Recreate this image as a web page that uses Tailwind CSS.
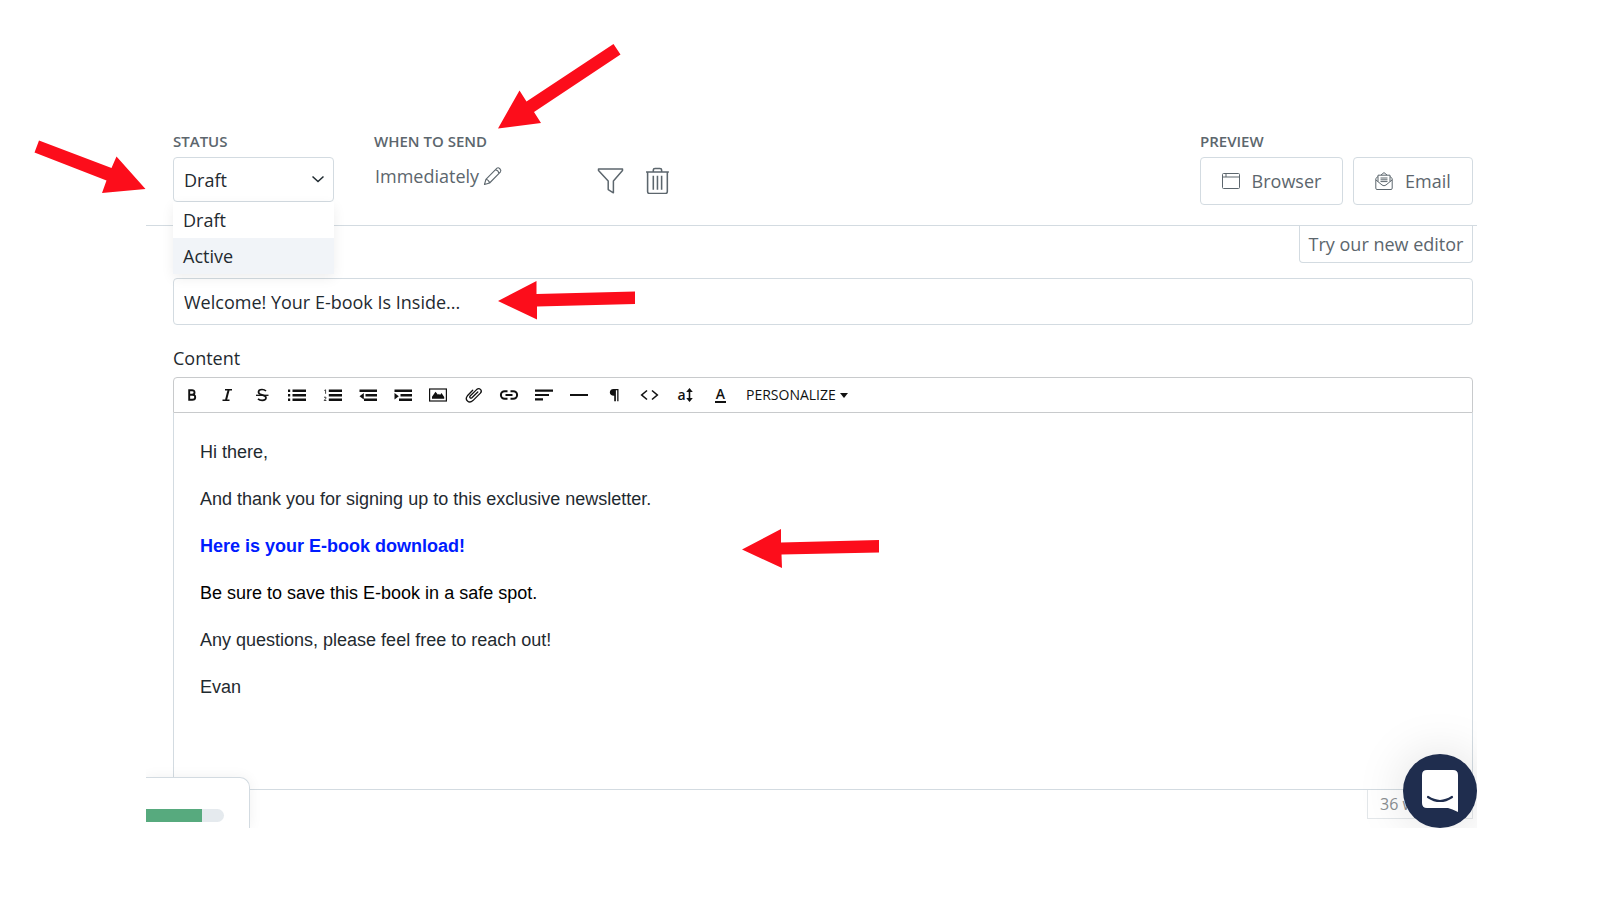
<!DOCTYPE html>
<html lang="en">
<head>
<meta charset="utf-8">
<title>Email editor</title>
<script src="https://cdn.jsdelivr.net/npm/@tailwindcss/browser@4"></script>
</head>
<body class="relative overflow-hidden bg-white font-['Open_Sans','Noto_Sans',sans-serif] text-lg text-[#1f2a30]">
<main class="relative mt-[120px] mr-[123px] ml-[146px] overflow-hidden pb-[9px]">
  <header class="flex items-start border-b border-[#d3dbe1] pt-2 pr-1 pb-5 pl-[27px] text-[#5c666d]">
    <div class="relative w-[201px]">
      <label for="status" class="block h-[29px] text-[15px] leading-[26px] font-semibold">STATUS</label>
      <div class="relative w-[161px]">
        <select id="status" class="block h-[45px] w-full appearance-none rounded-sm border border-[#d3dbe1] bg-white px-2.5 text-lg text-[#1f2a30]">
          <option selected>Draft</option>
          <option>Active</option>
        </select>
        <svg class="pointer-events-none absolute top-4 right-2.5 size-3" viewBox="0 0 12 12" fill="none" stroke="#1f2a30" stroke-width="1.5"><path d="M.5 3.500l5.500 5 5.500-5"/></svg>
      </div>
    </div>
    <div>
      <h2 class="h-[29px] text-[15px] leading-[26px] font-semibold">WHEN TO SEND</h2>
      <div class="flex">
        <button type="button" class="flex h-[38px] w-[223px] items-center gap-1 pl-px text-lg">
          Immediately
          <svg class="size-5" viewBox="0 0 20 20" fill="none" stroke="currentColor" stroke-width="1.1" stroke-linejoin="round"><path d="M1.500 18.500l1.400-5.200L14 2.200c1.500-1.300 4.900 1.500 3.500 3.600L6.600 17zM2.900 13.300c1.800.4 3.200 1.700 3.700 3.700M12.400 3.800c1.800.4 3.200 1.800 3.600 3.600"/></svg>
        </button>
        <button type="button" aria-label="Filter" class="mt-2 mr-[21px]"><svg class="size-[27px]" viewBox="0 0 27 27" fill="none" stroke="currentColor" stroke-width="1.5" stroke-linejoin="round"><path d="M1.500 2h24v1.600L16.400 14v11.800l-5.200-3.200V14L1.500 3.600z"/></svg></button>
        <button type="button" aria-label="Delete" class="mt-2"><svg class="size-[27px]" viewBox="0 0 26 26" fill="none" stroke="currentColor" stroke-width="1.5"><path d="M2.500 5v18.500q0 2 2 2h15q2 0 2-2V5M1 4.800h22M8 4.500V3q0-1.600 1.600-1.600h4.800Q16 1.400 16 3v1.500M8 8.500v13.500M12 8.500v13.500M16 8.500v13.500"/></svg></button>
      </div>
    </div>
    <div class="ml-auto">
      <h2 class="h-[29px] text-[15px] leading-[26px] font-semibold">PREVIEW</h2>
      <div class="flex gap-2.5">
        <button type="button" class="flex h-12 w-[143px] items-center justify-center gap-3 rounded-sm border border-[#d3dbe1]">
          <svg class="size-[18px]" viewBox="0 0 18 18" fill="none" stroke="currentColor" stroke-width="1"><rect x=".5" y="1.500" width="17" height="15" rx="1"/><path d="M.5 5h17M4 1.500V5"/></svg>
          Browser
        </button>
        <button type="button" class="flex h-12 w-[120px] items-center justify-center gap-3 rounded-sm border border-[#d3dbe1]">
          <svg class="size-[18px]" viewBox="0 0 18 18" fill="none" stroke="currentColor" stroke-width="1" stroke-linejoin="round"><path d="M3 4.500L.8 6.500v9.700q0 1.300 1.200 1.300h14q1.200 0 1.200-1.300V6.500L15 4.500M1 8l6 5q2 1.600 4 0l6-5M3 9.600V3.200h12v6.400M6 3L9 .6 12 3M5.500 6h7M5.500 7.800h7M5.500 9.600h7"/></svg>
          Email
        </button>
      </div>
    </div>
  </header>

  <section class="pr-1 pl-[27px]">
    <div class="flex h-[52px] items-start justify-end">
      <a href="#new-editor" class="flex h-[37px] w-[174px] items-center justify-center rounded-b-sm border border-t-0 border-[#d3dbe1] text-[#5c666d]">Try our new editor</a>
    </div>
    <input aria-label="Subject" type="text" value="Welcome! Your E-book Is Inside..." class="block h-[47px] w-full rounded-sm border border-[#d3dbe1] px-2.5 text-lg">
    <h2 class="mt-5 h-8 leading-[26px]">Content</h2>

    <div role="toolbar" aria-label="Formatting" class="flex h-9 items-center rounded-t-sm border border-[#c8cacc] text-[#111]">
      <div class="grid w-[564px] grid-cols-16">
        <button type="button" aria-label="Bold" class="grid place-items-center"><svg class="size-5" viewBox="0 0 20 20" fill="none" stroke="currentColor" stroke-width="1.900"><path d="M7.200 5.200v9.600h3q3 0 3-2.600T10 9.700H7.500h2.300q2.700 0 2.700-2.300T9.800 5.200z"/></svg></button>
        <button type="button" aria-label="Italic" class="grid place-items-center"><svg class="size-5" viewBox="0 0 20 20" fill="none" stroke="currentColor" stroke-width="1.500"><path d="M8 4.800h7M5.500 15.200h7"/><path stroke-width="2" d="M11.600 5L9 15"/></svg></button>
        <button type="button" aria-label="Strikethrough" class="grid place-items-center"><svg class="size-5" viewBox="0 0 20 20" fill="none" stroke="currentColor" stroke-width="1.700"><path d="M14 6q-1.500-1.500-4-1.500-3.500 0-3.500 2.500 0 2 3.500 2.800 4 .9 4 3 0 2.500-3.800 2.500-2.700 0-4.200-1.500"/><path stroke-width="1.300" d="M4 10.300h12.500"/></svg></button>
        <button type="button" aria-label="Bulleted list" class="grid place-items-center"><svg class="size-5" viewBox="0 0 20 20" fill="none" stroke="currentColor" stroke-width="2.400"><path d="M5.500 5.700H19M5.500 10.200H19M5.500 14.700H19M1 5.700h2.200M1 10.200h2.200M1 14.700h2.200"/></svg></button>
        <button type="button" aria-label="Numbered list" class="grid place-items-center"><svg class="size-5" viewBox="0 0 20 20" fill="none" stroke="currentColor" stroke-width="2.400"><path d="M5.800 5.700H19M5.800 10.200H19M5.800 14.700H19"/><path stroke-width=".8" d="M1.300 5.500l1.300-.7v4M1 12.300q2.500-.8 2 .8L1.200 15.500h2.200"/></svg></button>
        <button type="button" aria-label="Outdent" class="grid place-items-center"><svg class="size-5" viewBox="0 0 20 20" fill="none" stroke="currentColor" stroke-width="2.400"><path d="M1.500 5.700H19M7.500 10.200H19M6 14.700H19"/><path fill="currentColor" stroke="none" d="M5.800 8v6.500L1.500 11.300z"/></svg></button>
        <button type="button" aria-label="Indent" class="grid place-items-center"><svg class="size-5" viewBox="0 0 20 20" fill="none" stroke="currentColor" stroke-width="2.400"><path d="M1.500 5.700H19M7.500 10.200H19M6 14.700H19"/><path fill="currentColor" stroke="none" d="M1.500 8v6.500l4.300-3.200z"/></svg></button>
        <button type="button" aria-label="Image" class="grid place-items-center"><svg class="size-5" viewBox="0 0 20 20"><rect x="1.600" y="4" width="16.800" height="12" fill="none" stroke="currentColor" stroke-width="1.200"/><path fill="currentColor" d="M4 13.800v-2l3.500-5 2.500 3 1-1 1 1.200L13.500 8l2.700 4v1.800z"/></svg></button>
        <button type="button" aria-label="Attachment" class="grid place-items-center"><svg class="size-5" viewBox="0 0 20 20" fill="none" stroke="currentColor" stroke-width="1.300" stroke-linecap="round"><path d="M13.800 7l-5.900 5.700c-1.300 1.200-3-.4-1.800-1.700l6.500-6.400c2.800-2.500 6.200.7 3.800 3.500l-7.500 7.500c-4 3.600-8.600-1-5.500-4.800l5.300-5.600"/></svg></button>
        <button type="button" aria-label="Link" class="grid place-items-center"><svg class="size-5" viewBox="0 0 20 20" fill="none" stroke="currentColor" stroke-width="2"><path d="M8.500 6.200H5.700a3.800 3.800 0 000 7.600H8.500M11.500 6.200h2.800a3.800 3.800 0 010 7.600H11.500M6.500 10h7"/></svg></button>
        <button type="button" aria-label="Align" class="grid place-items-center"><svg class="size-5" viewBox="0 0 20 20" fill="none" stroke="currentColor" stroke-width="2.200"><path d="M1 5.700h18M1 10h14M1 14.300h8"/></svg></button>
        <button type="button" aria-label="Horizontal rule" class="grid place-items-center"><svg class="size-5" viewBox="0 0 20 20" stroke="currentColor" stroke-width="2"><path d="M1 10h18"/></svg></button>
        <button type="button" aria-label="Paragraph" class="grid place-items-center"><svg class="size-5" viewBox="0 0 20 20" fill="currentColor"><path d="M8.500 4H13.500v12.200h-1.300V5.300h-1.300v10.900H9.200V10.800C3.500 11 3.500 4 8.500 4z"/></svg></button>
        <button type="button" aria-label="Code" class="grid place-items-center"><svg class="size-5" viewBox="0 0 20 20" fill="none" stroke="currentColor" stroke-width="1.600"><path d="M7 5.500L1.700 10 7 14.500M12 5.500l5.300 4.500-5.300 4.500"/></svg></button>
        <button type="button" aria-label="Font size" class="flex h-5 items-center justify-center text-sm leading-5 font-semibold">a<svg class="h-4 w-[7px]" viewBox="0 0 7 16" fill="currentColor"><path d="M3.500 1l3.300 4H4.300v6h2.500l-3.300 4-3.300-4h2.500V5H.2z"/></svg></button>
        <button type="button" aria-label="Text colour" class="grid h-5 place-items-center"><span class="h-4 border-b-2 px-px text-sm leading-[13px] font-semibold">A</span></button>
      </div>
      <button type="button" class="flex items-center gap-1 pl-2 text-sm">PERSONALIZE<svg class="h-[5px] w-2" viewBox="0 0 8 5" fill="currentColor"><path d="M0 0h8L4 5z"/></svg></button>
    </div>

    <div contenteditable="true" role="textbox" aria-label="Content" class="flex h-[377px] flex-col gap-[23px] border border-t-0 border-[#d3dbe1] px-[26px] pt-[27px] font-['Liberation_Sans',Arial,sans-serif] text-lg leading-6">
      <p>Hi there,</p>
      <p>And thank you for signing up to this exclusive newsletter.</p>
      <p class="font-bold text-[#001cff]">Here is your E-book download!</p>
      <p class="text-black">Be sure to save this E-book in a safe spot.</p>
      <p>Any questions, please feel free to reach out!</p>
      <p>Evan</p>
    </div>
    <div class="ml-auto flex h-[29px] w-[106px] items-center border border-t-0 border-[#e3e7ea] pl-3 text-base whitespace-nowrap text-[#8b8f92]">36 words</div>
  </section>

  <aside aria-label="Setup progress" class="absolute bottom-0 left-0 h-[51px] w-[104px] rounded-tr-[10px] border-t border-r border-[#d3dbe1] bg-white pt-[31px] shadow-[0_0_14px_rgba(0,0,0,0.06)]">
    <div role="progressbar" aria-label="Progress" class="h-[13px] w-[78px] overflow-hidden rounded-r-full bg-[#e5eaee]"><div class="h-full w-14 bg-[#57aa7e]"></div></div>
  </aside>
  <button type="button" aria-label="Open chat" class="absolute right-0 bottom-0 grid size-[74px] place-items-center rounded-full bg-[#1f2d4e] shadow-[0_0_50px_rgba(0,0,0,0.13)]">
    <svg class="h-[42px] w-9" viewBox="0 0 36 42"><path fill="#fff" d="M5 0h26q5 0 5 5v37q-6-3-10-4H5q-5 0-5-5V5q0-5 5-5z"/><path fill="none" stroke="#1f2d4e" stroke-width="2.200" stroke-linecap="round" d="M6 27q12 8 24 0"/></svg>
  </button>
</main>

<ul aria-label="Status options" class="absolute top-[202px] left-[173px] w-[161px] bg-white shadow-[0_4px_12px_rgba(0,0,0,0.07)]">
  <li class="h-9 px-2.5 leading-9">Draft</li>
  <li class="h-9 bg-[#f1f4f8] px-2.5 leading-9">Active</li>
</ul>

<svg aria-hidden="true" class="pointer-events-none absolute top-0 left-0 h-[915px] w-[1600px]" viewBox="0 0 1600 915" fill="#fc0d1b">
  <path d="M39 140.500L111.500 168 116.500 156.500 145.500 189 102 193 106.500 180.500 34.500 152.500z"/>
  <path d="M613.500 44L526.500 101.500 519.500 90.500 498 128.500 541 123 534 112 620.500 54.500z"/>
  <path d="M498 301L536.500 281V294L635 291.500V304L537 306.500V319.500z"/>
  <path d="M742 549.500L781 529V542.500L879 540V552.500L781.500 554.500 782 568z"/>
</svg>
</body>
</html>
